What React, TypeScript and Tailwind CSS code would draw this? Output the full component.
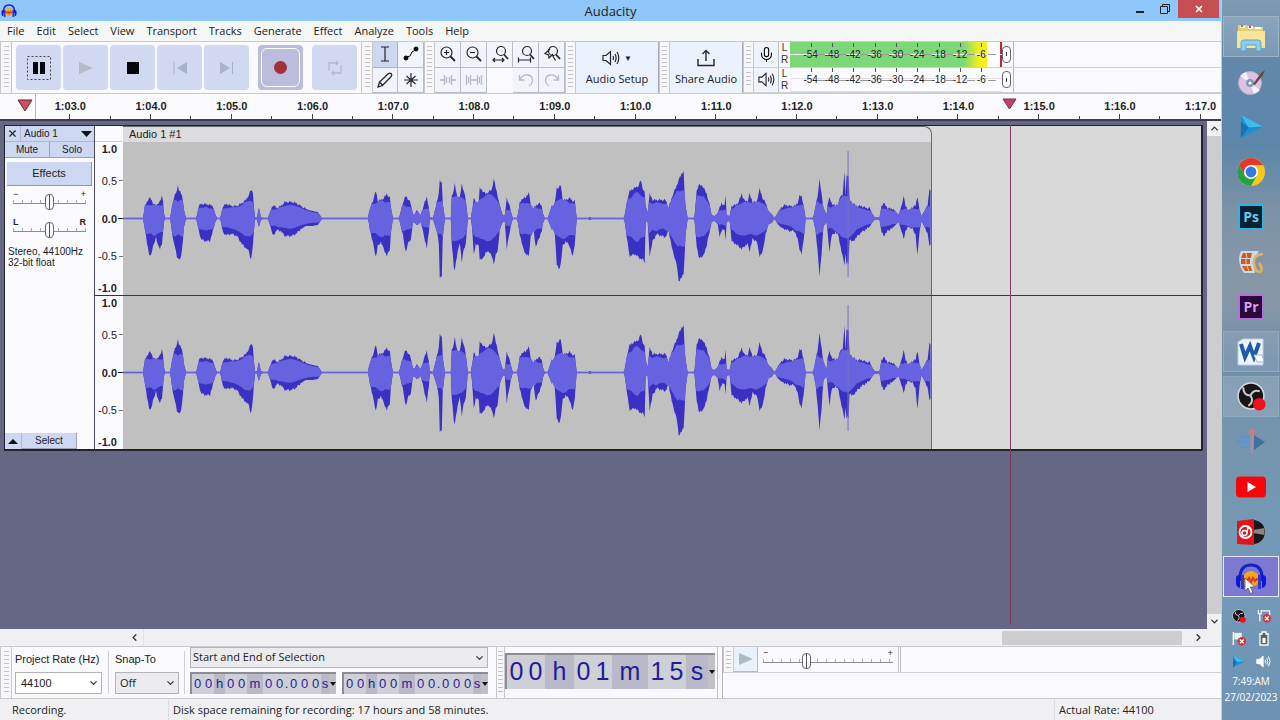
import type { ReactNode } from "react";
import clsx from "clsx";
import { ChevronDown, ChevronLeft, ChevronRight, ChevronUp, Mic, X } from "lucide-react";

const MENUS = ["File", "Edit", "Select", "View", "Transport", "Tracks", "Generate", "Effect", "Analyze", "Tools", "Help"];
const SECONDS = [3, 4, 5, 6, 7, 8, 9, 10, 11, 12, 13, 14, 15, 16, 17];
const DECIBELS = [-54, -48, -42, -36, -30, -24, -18, -12, -6];
const CLIP_START = 123;
const CLIP_WIDTH = 808;

// [x, height above the zero line, depth below it]
const ENVELOPE: number[][] = [
    [123, 0, 0], [143, 0, 0], [145, 12, 10], [147, 16, 24], [149, 20, 35], [151, 19, 36], [153, 15, 28], [156, 12, 18], [158, 15, 27], [160, 16, 29], [162, 22, 25], [163, 18, 15], [164, 5, 3], [165, 0, 0],
    [170, 0, 0], [171, 5, 5], [173, 17, 21], [175, 23, 27], [177, 27, 38], [178, 34, 40], [179, 27, 40], [181, 25, 38], [183, 18, 22], [184, 8, 8], [186, 0, 0],
    [196, 0, 0], [197, 3, 3], [199, 12, 12], [201, 14, 20], [205, 14, 22], [210, 13, 22], [213, 12, 12], [215, 5, 4], [217, 0, 0],
    [220, 0, 0], [221, 3, 3], [223, 12, 14], [227, 14, 16], [232, 12, 15], [237, 12, 17], [242, 15, 25], [246, 18, 29], [249, 23, 32], [251, 28, 41], [253, 26, 27], [254, 11, 12], [255, 1, 1],
    [257, 1, 1], [259, 10, 8], [261, 1, 1], [263, 0, 0],
    [268, 0, 0], [269, 3, 3], [271, 8, 9], [273, 13, 17], [277, 10, 11], [281, 12, 12], [285, 16, 17], [291, 16, 17], [296, 15, 15], [301, 12, 10], [306, 9, 7], [313, 7, 7], [318, 6, 6], [320, 3, 3], [322, 0, 0],
    [368, 0, 0], [369, 5, 4], [371, 12, 15], [374, 20, 28], [376, 27, 38], [378, 17, 27], [381, 18, 23], [384, 20, 30], [387, 24, 37], [390, 20, 30], [391, 12, 15], [393, 0, 0],
    [399, 0, 0], [400, 3, 3], [403, 15, 16], [406, 22, 33], [409, 18, 22], [411, 14, 21], [413, 4, 4], [415, 4, 4], [417, 8, 6], [419, 5, 5], [421, 3, 3], [423, 10, 12], [427, 21, 29], [429, 11, 14], [430, 1, 1],
    [433, 0, 0], [434, 3, 3], [437, 16, 12], [439, 25, 25], [440, 37, 58], [442, 35, 57], [443, 15, 19], [445, 0, 0],
    [451, 0, 0], [452, 22, 25], [454, 28, 48], [455, 34, 50], [457, 23, 38], [460, 20, 23], [462, 34, 43], [464, 27, 30], [466, 18, 25], [468, 0, 0],
    [471, 0, 0], [472, 6, 6], [474, 20, 35], [476, 15, 25], [479, 17, 27], [480, 30, 40], [483, 27, 40], [486, 24, 33], [490, 27, 33], [492, 28, 37], [494, 39, 45], [496, 30, 35], [498, 22, 32], [500, 12, 10], [503, 3, 3], [505, 3, 3], [507, 20, 30], [509, 15, 18], [511, 7, 7], [513, 0, 0],
    [517, 0, 0], [518, 3, 3], [520, 15, 15], [523, 20, 28], [526, 20, 35], [529, 26, 37], [531, 13, 17], [534, 10, 12], [536, 12, 28], [539, 15, 20], [542, 12, 12], [543, 5, 5], [545, 0, 0],
    [548, 0, 0], [549, 3, 3], [552, 12, 10], [555, 14, 13], [557, 30, 45], [559, 30, 50], [561, 33, 45], [563, 18, 27], [566, 18, 22], [570, 20, 27], [573, 17, 38], [575, 17, 25], [577, 0, 0],
    [589, 0, 0], [590, 1, 1], [592, 0, 0],
    [624, 0, 0], [625, 3, 3], [628, 20, 25], [630, 27, 37], [635, 30, 35], [639, 32, 38], [641, 38, 40], [643, 30, 40], [645, 25, 43], [646, 12, 3], [648, 5, 3], [650, 24, 37], [653, 18, 22], [657, 18, 15], [662, 18, 17], [666, 18, 18], [669, 10, 12], [673, 23, 32], [677, 32, 45], [679, 38, 62], [682, 44, 58], [684, 47, 55], [685, 22, 35], [686, 12, 15], [688, 0, 0],
    [694, 0, 0], [695, 3, 3], [697, 27, 27], [699, 33, 38], [703, 32, 38], [707, 24, 27], [710, 13, 12], [712, 3, 3], [715, 2, 2], [718, 5, 5], [720, 10, 17], [722, 15, 12], [725, 12, 10], [726, 23, 22], [727, 3, 3], [730, 2, 2],
    [732, 12, 22], [736, 13, 25], [739, 16, 27], [742, 24, 30], [745, 17, 27], [748, 17, 25], [750, 24, 32], [753, 16, 20], [757, 16, 22], [760, 29, 37], [763, 20, 33], [766, 15, 15], [769, 7, 5], [772, 4, 4], [775, 0, 0],
    [778, 5, 5], [781, 10, 8], [785, 13, 10], [790, 12, 12], [795, 12, 12], [798, 15, 20], [800, 22, 30], [802, 22, 35], [804, 13, 22], [806, 0, 0],
    [813, 0, 0], [814, 2, 2], [816, 12, 12], [818, 22, 32], [820, 38, 56], [822, 24, 35], [824, 10, 7], [827, 3, 3], [828, 15, 15], [830, 20, 32], [832, 15, 17], [836, 12, 13], [839, 15, 17], [841, 22, 28], [843, 23, 37], [845, 45, 45], [846, 22, 35], [847, 42, 45], [848, 43, 44], [849, 42, 45], [850, 18, 20], [853, 15, 23], [857, 12, 18], [862, 12, 13], [867, 10, 10], [870, 10, 8], [873, 4, 3], [875, 1, 1],
    [880, 1, 1], [882, 12, 13], [884, 15, 17], [888, 10, 12], [894, 9, 8], [899, 3, 3], [902, 12, 12], [904, 22, 20], [906, 12, 12], [909, 8, 8], [913, 11, 10], [916, 12, 15], [918, 22, 37], [920, 8, 12], [922, 2, 2], [925, 7, 8], [928, 13, 15], [930, 28, 26], [931, 28, 26],
];

function sample(side: number) {
    const out: number[] = [];
    let k = 0;
    for (let i = 0; i <= CLIP_WIDTH; i++) {
        const x = CLIP_START + i;
        while (k < ENVELOPE.length - 2 && ENVELOPE[k + 1][0] < x) k++;
        const [a, b] = [ENVELOPE[k], ENVELOPE[k + 1]];
        const t = (x - a[0]) / (b[0] - a[0]);
        const v = a[side] + (b[side] - a[side]) * t;
        out.push(v > 9 ? v + ((i * 7) % 5) * 0.6 - 1.2 : v);
    }
    return out;
}

function soften(values: number[], ratio: number) {
    return values.map((v, i) => {
        const near = values.slice(Math.max(0, i - 7), i + 8).filter((n) => n > 2);
        const mean = near.reduce((sum, n) => sum + n, 0) / Math.max(near.length, 1);
        return Math.min(v, mean * ratio);
    });
}

function outline(up: number[], down: number[]) {
    const top = up.map((v, i) => `${i},${(76 - v - 0.4).toFixed(1)}`);
    const bottom = down.map((v, i) => `${i},${(76 + v + 0.4).toFixed(1)}`).reverse();
    return `M${top.join("L")}L${bottom.join("L")}Z`;
}

const UP = sample(1);
const DOWN = sample(2);
const PEAK_PATH = outline(UP, DOWN);
const RMS_PATH = outline(soften(UP, 0.84), soften(DOWN, 0.6));

function Waveform() {
    return (
        <svg viewBox="0 0 808 152" preserveAspectRatio="none" className="block h-full w-full">
            <path d="M0 76H808" stroke="#3a30b4" strokeWidth="1.4" />
            <path d={PEAK_PATH} fill="#3a30c4" />
            <path d={RMS_PATH} fill="#6763e0" />
            <path d="M725.5 9V134" stroke="#7771bd" strokeWidth="1" />
        </svg>
    );
}

function Grip({ className }: { className?: string }) {
    return (
        <div className={clsx("flex shrink-0 items-center justify-center self-stretch border-x border-[#c8c8cc] bg-[#f7f7f9] py-1", className)}>
            <div className="h-full w-[5px] bg-[repeating-linear-gradient(to_bottom,#c4c4c8_0_1px,transparent_1px_4px)]" />
        </div>
    );
}

function BigButton({ label, children, className }: { label: string; children: ReactNode; className?: string }) {
    return (
        <button aria-label={label} className={clsx("flex size-[45px] items-center justify-center rounded-sm", className ?? "bg-[#d0d9f1]")}>
            {children}
        </button>
    );
}

function SmallButton({ label, children, active }: { label: string; children: ReactNode; active?: boolean }) {
    return (
        <button aria-label={label} className={clsx("flex items-center justify-center border-r border-b", active ? "border-[#a9b0c8] bg-[#cdd7f1]" : "border-[#b9bcc8] bg-[#f1f4fc]")}>
            {children}
        </button>
    );
}

function Glass({ children }: { children?: ReactNode }) {
    return (
        <svg width="18" height="18" viewBox="0 0 18 18" fill="none" stroke="#25252d" strokeWidth="1.2">
            {children}
        </svg>
    );
}

function Lens() {
    return (
        <>
            <circle cx="7.500" cy="7.500" r="5.500" />
            <path d="M11.500 11.500L16 16" strokeWidth="1.800" />
        </>
    );
}

function SmallLens() {
    return (
        <>
            <circle cx="10" cy="6" r="4.500" />
            <path d="M13 9.500L17 14" strokeWidth="1.800" />
        </>
    );
}

function Speaker({ size = 18, stroke = "#25252d", fill = "none" }: { size?: number; stroke?: string; fill?: string }) {
    return (
        <svg width={size} height={size} viewBox="0 0 18 18" fill="none" stroke={stroke} strokeWidth="1.2">
            <path d="M1 6.5H4L8.5 2.5V15.5L4 11.5H1Z" fill={fill} />
            <path d="M11 7Q12 9 11 11M13 5Q15.2 9 13 13M15 3Q18.6 9 15 15" />
        </svg>
    );
}

function TransportBar() {
    return (
        <div className="flex items-center">
            <Grip className="w-3" />
            <div className="flex gap-[2px] pl-1">
                <BigButton label="Pause">
                    <svg width="24" height="24" viewBox="0 0 24 24">
                        <rect x="0.5" y="0.5" width="23" height="23" fill="none" stroke="#444" strokeDasharray="2 2" />
                        <path d="M6 6H11V18H6ZM13 6H18V18H13Z" fill="#05050c" />
                    </svg>
                </BigButton>
                <BigButton label="Play">
                    <svg width="16" height="14" viewBox="0 0 16 14"><path d="M1 1L15 7L1 13Z" fill="#b1bbcc" /></svg>
                </BigButton>
                <BigButton label="Stop">
                    <svg width="12" height="12" viewBox="0 0 12 12"><path d="M0 0H12V12H0Z" fill="#05050c" /></svg>
                </BigButton>
                <BigButton label="Skip to start">
                    <svg width="16" height="14" viewBox="0 0 16 14"><path d="M15 1L5 7L15 13Z" fill="#a9b3c6" /><path d="M2 1V13" stroke="#a9b3c6" /></svg>
                </BigButton>
                <BigButton label="Skip to end">
                    <svg width="16" height="14" viewBox="0 0 16 14"><path d="M1 1L11 7L1 13Z" fill="#a9b3c6" /><path d="M13.500 1V13" stroke="#a9b3c6" /></svg>
                </BigButton>
            </div>
            <div className="flex gap-[9px] pr-1 pl-[9px]">
                <BigButton label="Record" className="bg-[#bcbcdc]">
                    <span className="flex size-[39px] items-center justify-center rounded-md border border-white">
                        <span className="size-[13px] rounded-full bg-[#a5303a]" />
                    </span>
                </BigButton>
                <BigButton label="Loop">
                    <svg width="16" height="16" viewBox="0 0 16 16" fill="none" stroke="#b0bacb" strokeWidth="1.3">
                        <path d="M2 11V3H11M9 1L11 3L9 5M14 5V13H5M7 11L5 13L7 15" />
                    </svg>
                </BigButton>
            </div>
        </div>
    );
}

function EditBars() {
    return (
        <>
            <Grip className="w-3" />
            <div className="grid grid-cols-[25px_26px] grid-rows-2">
                <SmallButton label="Selection tool" active>
                    <svg width="14" height="18" viewBox="0 0 14 18" fill="none" stroke="#25252d" strokeWidth="1.2"><path d="M3 2H11M7 2V16M3 16H11" /></svg>
                </SmallButton>
                <SmallButton label="Envelope tool">
                    <svg width="18" height="18" viewBox="0 0 18 18" fill="#05050c" stroke="#05050c"><path d="M3 13L8 11L10 7L15 4" fill="none" /><circle cx="4" cy="13" r="2" /><circle cx="14" cy="4" r="2" /></svg>
                </SmallButton>
                <SmallButton label="Draw tool">
                    <svg width="18" height="18" viewBox="0 0 18 18" fill="none" stroke="#25252d" strokeWidth="1.3"><path d="M2 16L3.500 11L12.500 2.500Q14 1.500 15.200 2.800T15.200 5.500L6.500 14.500Z M4 11.500L6.500 14" /></svg>
                </SmallButton>
                <SmallButton label="Multi tool">
                    <svg width="16" height="16" viewBox="0 0 16 16" stroke="#25252d" strokeWidth="1.200"><path d="M8 1V15M1 8H15M3.500 4L12.500 12M12.500 4L3.500 12" /></svg>
                </SmallButton>
            </div>
            <Grip className="w-[11px]" />
            <div className="grid grid-cols-5 grid-rows-2">
                <SmallButton label="Zoom in"><Glass><Lens /><path d="M5 7.500H10M7.500 5V10" /></Glass></SmallButton>
                <SmallButton label="Zoom out"><Glass><Lens /><path d="M5 7.500H10" /></Glass></SmallButton>
                <SmallButton label="Fit selection to width"><Glass><SmallLens /><path d="M2 15H13M4 13L2 15L4 17M11 13L13 15L11 17" /></Glass></SmallButton>
                <SmallButton label="Fit project to width"><Glass><SmallLens /><path d="M1.500 15H13.500M1.500 12.500V17.500M13.500 12.500V17.500" /></Glass></SmallButton>
                <SmallButton label="Zoom toggle"><Glass><SmallLens /><path d="M7 4L2 8.500L5.500 10L6 13L10 9M9.500 10.500L12.500 15.500" /></Glass></SmallButton>
                <SmallButton label="Trim audio">
                    <svg width="16" height="14" viewBox="0 0 16 14" stroke="#b7bac6" fill="none"><path d="M0 7H4M12 7H16M4.500 2V12M6.500 4V10M9.500 4V10M11.500 2V12" strokeWidth="1.300" /></svg>
                </SmallButton>
                <SmallButton label="Silence audio">
                    <svg width="18" height="14" viewBox="0 0 18 14" stroke="#b7bac6" fill="none"><path d="M1.500 2V12M3.500 4V10M5.500 2V12M6 7H12M12.500 2V12M14.500 4V10M16.500 2V12" strokeWidth="1.300" /></svg>
                </SmallButton>
                <div className="w-[26px]" />
                <SmallButton label="Undo">
                    <svg width="18" height="16" viewBox="0 0 18 16" stroke="#b7bac6" strokeWidth="1.300" fill="none"><path d="M2.500 3V8H7.500M3 7.500Q6 2 11 3T15.500 9Q15 12 12 14" /></svg>
                </SmallButton>
                <SmallButton label="Redo">
                    <svg width="18" height="16" viewBox="0 0 18 16" stroke="#b7bac6" strokeWidth="1.300" fill="none"><path d="M15.500 3V8H10.500M15 7.500Q12 2 7 3T2.500 9Q3 12 6 14" /></svg>
                </SmallButton>
            </div>
        </>
    );
}

function MeterRow({ label, icon, live }: { label: string; icon: ReactNode; live?: boolean }) {
    return (
        <div className="flex h-[26px] border-b border-[#cfcfd6]">
            <Grip className="w-[11px]" />
            <button aria-label={label} className="flex w-[25px] items-center justify-center border-r border-[#b9bcc8] bg-[#eef3fc]">{icon}</button>
            <div className="flex w-[11px] flex-col items-center justify-around font-[Liberation_Sans,sans-serif] text-[10px] leading-3 text-[#333]">
                <span>L</span>
                <span>R</span>
            </div>
            <div className="relative flex w-[212px] flex-col gap-[1px]">
                {[0, 1].map((n) => (
                    <div key={n} className={clsx("flex flex-1 border-[#e0e0e6]", live ? "bg-[#fdfdfd]" : "border-b bg-[#fbfbfe]")}>
                        {live && <div className="w-[93%] bg-[linear-gradient(to_right,#7cd877_88%,#f3f01c_96%)]" />}
                        {live && <div className="ml-auto w-[2px] bg-[#c22531]" />}
                    </div>
                ))}
                <div className="absolute inset-0 flex items-center px-[10px] font-[Liberation_Sans,sans-serif] text-[10px] text-[#222]">
                    {DECIBELS.map((db) => (
                        <span key={db} className="relative flex-1 text-center">
                            <span className="absolute -top-[4px] left-1/2 h-[4px] w-px bg-[#555]" />
                            <span className="absolute top-1/2 -right-1 h-px w-2 bg-[#999]" />
                            {db}
                        </span>
                    ))}
                </div>
            </div>
            <div className="flex w-[11px] items-center">
                <span className="flex h-[17px] w-[9px] items-center justify-center rounded-sm border border-[#666] bg-white">
                    <span className="h-1 w-px bg-[#333]" />
                </span>
            </div>
            <div className="w-px bg-[#b5b5ba]" />
        </div>
    );
}

function TopToolbars() {
    return (
        <div className="flex h-[53px] border-y border-[#c9c9ce] bg-[#f9f9fe]">
            <TransportBar />
            <EditBars />
            <Grip className="w-[11px]" />
            <button className="flex w-[83px] flex-col items-center justify-center gap-1 border-r border-[#a9acb8] bg-[#ebf2fd] text-[11px] leading-4 text-[#222]">
                <span className="flex items-center gap-1"><Speaker /><span className="text-[8px]">▼</span></span>
                Audio Setup
            </button>
            <Grip className="w-[11px]" />
            <button className="flex w-[73px] flex-col items-center justify-center gap-1 border-r border-[#a9acb8] bg-[#ebf2fd] text-[11px] leading-4 whitespace-nowrap text-[#222]">
                <svg width="18" height="18" viewBox="0 0 18 18" fill="none" stroke="#25252d" strokeWidth="1.4"><path d="M1 10V16.500H17V10M9 12V1.500M5.500 5L9 1.500L12.500 5" /></svg>
                Share Audio
            </button>
            <div className="flex flex-1 flex-col">
                <MeterRow label="Record meter" icon={<Mic size={17} strokeWidth={1.5} />} live />
                <MeterRow label="Playback meter" icon={<Speaker size={17} />} />
            </div>
        </div>
    );
}

function Timeline() {
    return (
        <div className="relative flex h-[27px] overflow-hidden border-b-2 border-[#3c3b52] bg-[#fafaff] font-[Liberation_Sans,sans-serif]">
            <div className="-mr-[6px] flex w-9 shrink-0 justify-center border-r border-[#b5b5ba] pt-[5px] pl-[14px]">
                <svg width="16" height="13" viewBox="0 0 16 13"><path d="M1 1H15L8 12Z" fill="#d0505c" stroke="#5c2a33" /></svg>
            </div>
            <div className="-mr-5 flex flex-1">
                {SECONDS.map((s) => (
                    <div key={s} className="flex flex-1 flex-col justify-between">
                        <span className="pt-1 text-center text-[11px] leading-4 font-bold text-[#222]">1:{String(s).padStart(2, "0")}.0</span>
                        <div className="flex items-end">
                            <span className="h-[5px] flex-1 border-r border-[#444]" />
                            <span className="h-[3px] flex-1 border-r border-[#444]" />
                        </div>
                    </div>
                ))}
            </div>
            <svg width="15" height="12" viewBox="0 0 15 12" className="absolute top-1 left-[82.1%]"><path d="M1 1H14L7.500 11Z" fill="#c04468" stroke="#7a3048" /></svg>
        </div>
    );
}

function RangeRow({ label, left, right, className, value = 50 }: { label: string; left: string; right: string; className?: string; value?: number }) {
    return (
        <label className={clsx("flex flex-col", className)}>
            <span className="-mb-1 flex justify-between text-[9px] leading-2 text-[#222]">
                <span>{left}</span>
                <span>{right}</span>
            </span>
            <input
                type="range"
                aria-label={label}
                defaultValue={value}
                className="h-4 w-full appearance-none bg-[linear-gradient(#8b8b90,#8b8b90),repeating-linear-gradient(to_right,#aaa_0_1px,transparent_1px_9px)] bg-[length:100%_1px,100%_3px] bg-[position:0_9px,0_6px] bg-no-repeat [&::-webkit-slider-thumb]:h-4 [&::-webkit-slider-thumb]:w-[9px] [&::-webkit-slider-thumb]:appearance-none [&::-webkit-slider-thumb]:rounded-sm [&::-webkit-slider-thumb]:border [&::-webkit-slider-thumb]:border-[#666] [&::-webkit-slider-thumb]:bg-[linear-gradient(to_right,#fff_3px,#555_3px_4px,#fff_4px)]"
            />
        </label>
    );
}

function TrackPanel() {
    return (
        <div className="flex w-[90px] shrink-0 flex-col border-r border-[#4a4a5c] bg-[#fafaff] text-[10px] text-[#222]">
            <div className="flex h-4 border-b border-[#b0b8d0] bg-[#ccd7f2]">
                <button aria-label="Close track" className="flex w-4 items-center justify-center border-r border-[#b0b8d0]"><X size={11} strokeWidth={2.5} /></button>
                <button className="flex flex-1 items-center justify-between pr-[2px] pl-[3px]">
                    Audio 1
                    <svg width="11" height="6" viewBox="0 0 11 6"><path d="M0 0H11L5.500 6Z" fill="#111" /></svg>
                </button>
            </div>
            <div className="flex h-4 border-b border-[#9aa2bc] bg-[#ccd7f2]">
                <button className="flex-1 border-r border-[#9aa2bc]">Mute</button>
                <button className="flex-1">Solo</button>
            </div>
            <button className="mx-[2px] mt-1 h-6 border-r border-b border-[#8f97b0] bg-[#ccd7f2] text-[11px]">Effects</button>
            <RangeRow label="Gain" left="−" right="+" className="mx-2 mt-1" />
            <RangeRow label="Pan" left="L" right="R" className="mx-2 mt-2 font-bold" />
            <p className="mt-2 pl-[3px] leading-[11px] whitespace-nowrap">Stereo, 44100Hz<br />32-bit float</p>
            <div className="mt-auto mr-[17px] flex h-4 bg-[#ccd7f2]">
                <button aria-label="Collapse track" className="flex w-[17px] items-center justify-center border-r border-[#b0b8d0]">
                    <svg width="10" height="5" viewBox="0 0 10 5"><path d="M0 5H10L5 0Z" fill="#111" /></svg>
                </button>
                <button className="flex-1 border-r border-b border-[#9aa2bc]">Select</button>
            </div>
        </div>
    );
}

function VerticalScale() {
    return (
        <div className="grid flex-1 grid-rows-[14px_1fr_26px_1fr_14px] items-center text-right text-[11px] leading-3 text-[#222]">
            <span className="pr-[6px] font-bold">1.0</span>
            <span className="flex items-center justify-end gap-[2px]">0.5<i className="h-px w-1 bg-[#777]" /></span>
            <span className="flex items-center justify-end gap-[1px] font-bold">0.0<i className="h-px w-[5px] bg-[#222]" /></span>
            <span className="flex items-center justify-end gap-[2px]">-0.5<i className="h-px w-1 bg-[#777]" /></span>
            <span className="pr-[6px] font-bold">-1.0</span>
        </div>
    );
}

function Workspace() {
    return (
        <div className="relative flex min-h-0 flex-1 bg-[#666685]">
            <div className="min-w-0 flex-1 px-1 pt-1">
                <div className="flex h-[326px] border border-r-2 border-b-2 border-[#22222e] bg-[#d9d9d9] font-[Liberation_Sans,sans-serif]">
                    <TrackPanel />
                    <div className="flex w-7 shrink-0 flex-col bg-[#fbfbff]">
                        <div className="h-4 border-b border-[#ccc]" />
                        <VerticalScale />
                        <div className="h-px bg-[#333]" />
                        <VerticalScale />
                    </div>
                    <div className="relative min-w-0 flex-1">
                        <div className="flex h-full w-3/4 flex-col rounded-tr-lg border-t border-r border-[#6a6a6e] bg-[#c0c0c0]">
                            <div className="h-[15px] rounded-tr-lg bg-[#dcdcde] pl-[6px] text-[11px] leading-[15px] text-[#222]">Audio 1 #1</div>
                            <div className="min-h-0 flex-1"><Waveform /></div>
                            <div className="h-px" />
                            <div className="min-h-0 flex-1"><Waveform /></div>
                        </div>
                        <div className="absolute inset-x-0 top-[169px] h-px bg-[#3a3a3e]" />
                    </div>
                </div>
            </div>
            <div className="absolute top-1 bottom-1 left-[82.7%] w-px bg-[#7a3c62]" />
            <div className="flex w-[14px] flex-col items-center bg-[#cdcdcf] text-[#333]">
                <button aria-label="Scroll up" className="flex h-[15px] w-full items-center justify-center bg-[#f1f1f3]"><ChevronUp size={11} strokeWidth={3} /></button>
                <button aria-label="Scroll down" className="mt-auto flex h-[15px] w-full items-center justify-center bg-[#f1f1f3]"><ChevronDown size={11} strokeWidth={3} /></button>
            </div>
        </div>
    );
}

function Digits({ text, large }: { text: string; large?: boolean }) {
    return (
        <div className={clsx("flex border-t-2 border-l-2 border-[#8c8c92] bg-[#cfcfd8] font-[Liberation_Sans,sans-serif] text-[#221c98]", large ? "h-9 text-[25px]" : "h-[22px] text-[13px]")}>
            {text.split("").map((c, i) => (
                <span
                    key={i}
                    className={clsx(
                        "flex items-center justify-center",
                        /\d/.test(c) && (large ? "w-[19px]" : "w-[11px]"),
                        c === "h" && (large ? "w-[29px] bg-[#b9b9ca]" : "w-[11px] bg-[#b9b9ca]"),
                        c === "m" && (large ? "w-9 bg-[#b9b9ca]" : "w-4 bg-[#b9b9ca]"),
                        c === "s" && (large ? "w-[22px] bg-[#b9b9ca]" : "w-2 bg-[#b9b9ca]"),
                        c === "." && "w-[3px]",
                    )}
                >
                    {c}
                </span>
            ))}
            <button aria-label="Time format" className="flex w-[7px] items-center justify-center bg-[#c0c0c6]">
                <svg width="6" height="4" viewBox="0 0 6 4"><path d="M0 0H6L3 4Z" fill="#111" /></svg>
            </button>
        </div>
    );
}

function Select({ id, label, value, className }: { id: string; label?: string; value: string; className: string }) {
    return (
        <span className="relative flex">
            <select id={id} aria-label={label} className={clsx("w-full appearance-none border border-[#b4b4b8] text-[11px] text-[#222]", className)}>
                <option>{value}</option>
            </select>
            <ChevronDown size={11} strokeWidth={2.5} className="pointer-events-none absolute top-1/2 right-[3px] -translate-y-1/2 text-[#333]" />
        </span>
    );
}

function BottomToolbars() {
    return (
        <div className="flex h-[53px] border-y border-[#c9c9ce] bg-[#f9f9fe] text-[11px] text-[#222]">
            <Grip className="w-3" />
            <div className="flex w-[90px] flex-col justify-between py-1 pl-[3px]">
                <label htmlFor="rate" className="font-[Liberation_Sans,sans-serif] leading-4 whitespace-nowrap">Project Rate (Hz)</label>
                <Select id="rate" value="44100" className="h-[22px] bg-white pl-[5px] font-[Liberation_Sans,sans-serif]" />
            </div>
            <div className="mx-[6px] my-1 w-px bg-[#d0d0d4]" />
            <div className="flex w-[64px] flex-col justify-between py-1">
                <label htmlFor="snap" className="font-[Liberation_Sans,sans-serif] leading-4">Snap-To</label>
                <Select id="snap" value="Off" className="h-[22px] bg-[#ebebed] pl-1" />
            </div>
            <div className="mx-[5px] my-1 w-px bg-[#d0d0d4]" />
            <div className="flex flex-col justify-between pb-1">
                <Select id="range" label="Selection range" value="Start and End of Selection" className="h-[21px] bg-[#ebebed] pl-[2px]" />
                <div className="flex gap-[6px]">
                    <Digits text="00h00m00.000s" />
                    <Digits text="00h00m00.000s" />
                </div>
            </div>
            <Grip className="ml-2 w-[9px]" />
            <div className="mr-1 flex items-start border-r border-[#c0c0c5] pt-[6px] pr-[2px]"><Digits text="00h01m15s" large /></div>
            <div className="flex flex-1 flex-col border-l border-[#b5b5ba]">
                <div className="flex h-[26px] border-b border-[#cfcfd6]">
                    <Grip className="w-[11px]" />
                    <button aria-label="Play at speed" className="flex w-6 items-center justify-center border-r border-b border-[#b9bcc8] bg-[#e9f1fc]">
                        <svg width="14" height="12" viewBox="0 0 14 12"><path d="M0 0L14 6L0 12Z" fill="#a9bbc6" /></svg>
                    </button>
                    <RangeRow label="Playback speed" left="−" right="+" value={32} className="mx-[5px] w-[130px] pt-[2px]" />
                    <div className="w-[3px] border-x border-[#c0c0c5]" />
                </div>
            </div>
        </div>
    );
}

function Obs({ size }: { size: number }) {
    return (
        <svg width={size} height={size} viewBox="0 0 28 28">
            <circle cx="13.500" cy="13.500" r="12.500" fill="#171719" stroke="#d8d8da" strokeWidth="1.5" />
            <g fill="none" stroke="#c9c9cc" strokeWidth="2">
                <path d="M13 13Q6 13 6 5" />
                <path d="M13 13Q16 7 22 9" />
                <path d="M13 13Q17 19 11 23" />
            </g>
            <circle cx="21.500" cy="21.500" r="6" fill="#f4101a" />
        </svg>
    );
}

function BlueArrow({ size }: { size: number }) {
    return (
        <svg width={size} height={size} viewBox="0 0 26 26">
            <path d="M2 1L25 13L2 25Z" fill="#1c8fd0" />
            <path d="M2 1L25 13L10 14Z" fill="#45b8ee" />
            <path d="M2 25L10 14L2 8Z" fill="#1673b2" />
        </svg>
    );
}

function AudacityLogo({ size }: { size: number }) {
    return (
        <svg width={size} height={size} viewBox="0 0 32 32">
            <circle cx="16" cy="18" r="8" fill="#f6a61e" />
            <path d="M7 19L10 18L12 20L14 17L16 21L18 17L20 20L22 18L25 19" stroke="#e23b18" strokeWidth="2.200" fill="none" />
            <path d="M5 20V15Q6 4 16 4T27 15V20" fill="none" stroke="#1522c8" strokeWidth="3" />
            <path d="M1 17Q1 14 5 14V27Q1 26 1 22ZM31 17Q31 14 27 14V27Q31 26 31 22Z" fill="#0d16d8" />
            <path d="M6 14H9V28H6ZM23 14H26V28H23Z" fill="#2a38d0" />
        </svg>
    );
}

function AdobeTile({ text, className }: { text: string; className: string }) {
    return <span className={clsx("flex size-[26px] items-center justify-center border-2 text-[14px] leading-none font-bold", className)}>{text}</span>;
}

const APPS: { name: string; frame?: string; icon: ReactNode }[] = [
    {
        name: "File Explorer",
        frame: "border-[#9db2c5] bg-white/15",
        icon: (
            <svg width="32" height="32" viewBox="0 0 32 32">
                <path d="M3 4H12L14 6H28V26H3Z" fill="#e9cf72" />
                <path d="M5 5H10V7H5ZM13 5H18V8H13ZM20 6H26V8H20Z" fill="#fff" />
                <path d="M6 4H8V6H6Z" fill="#4a9a44" />
                <path d="M14 5H16V7H14Z" fill="#c8483a" />
                <path d="M2 10H30V27H2Z" fill="#f8e59a" />
                <path d="M6 30V22Q6 19 9 19H23Q26 19 26 22V30H21V24H11V30Z" fill="#8fcdec" stroke="#5aa6d0" />
            </svg>
        ),
    },
    {
        name: "Disc Burner",
        icon: (
            <svg width="30" height="30" viewBox="0 0 30 30">
                <circle cx="14" cy="16" r="11.500" fill="#dcc3e4" stroke="#b9a6cc" />
                <path d="M14 16L4 9A12 12 0 0 1 10 5ZM14 16L24 23A12 12 0 0 1 18 27Z" fill="#f5f0fa" />
                <circle cx="14" cy="16" r="4" fill="#7c98c0" />
                <circle cx="14" cy="16" r="1.500" fill="#fff" />
                <path d="M17 17L25 6L29 3L27 8L19 18Z" fill="#6c4a38" />
            </svg>
        ),
    },
    { name: "Media Player", icon: <BlueArrow size={25} /> },
    {
        name: "Chrome",
        icon: (
            <svg width="30" height="30" viewBox="0 0 30 30">
                <circle cx="15" cy="15" r="14" fill="#f8c91c" />
                <path d="M2.900 8A14 14 0 0 0 15 29L21 18.500L15 15L9 18.500Z" fill="#27a046" />
                <path d="M2.900 8A14 14 0 0 1 27.100 8H15L9 18.500Z" fill="#e0392d" />
                <circle cx="15" cy="15" r="7" fill="#fff" />
                <circle cx="15" cy="15" r="5.400" fill="#3577e4" />
            </svg>
        ),
    },
    { name: "Photoshop", icon: <AdobeTile text="Ps" className="border-[#2fb2dc] bg-[#0b1f33] text-[#5fcdf0]" /> },
    {
        name: "Video Editor",
        icon: (
            <svg width="28" height="26" viewBox="0 0 28 26">
                <path d="M4 2H22Q15 12 18 24H7Q-1 13 4 2Z" fill="#c9dbe8" />
                <path d="M6 4H15L14 9H4ZM4 10H13V15H4ZM5 17H14L15 22H8Z" fill="#d05a22" />
                <path d="M9 4L10 9M9 10V15M10 17L12 22" stroke="#f2c8a0" strokeWidth="1" />
                <path d="M26 5Q16 6 17 14Q18 23 23 23Q27 21 22 14" fill="none" stroke="#e0b457" strokeWidth="2.500" />
            </svg>
        ),
    },
    { name: "Premiere", icon: <AdobeTile text="Pr" className="border-[#b66fd6] bg-[#2a0a3a] text-[#dc9cf4]" /> },
    {
        name: "Word",
        frame: "border-[#90a8bd] bg-white/10",
        icon: (
            <svg width="28" height="28" viewBox="0 0 28 28">
                <path d="M1 4L6 1H26V27H1Z" fill="#eef4fb" stroke="#b9cfe6" />
                <path d="M4 6L8 19L13 8L17 19L22 5" fill="none" stroke="#2259ac" strokeWidth="4" />
                <path d="M17 17H25L27 24H20Z" fill="#fff" stroke="#9db8d8" />
            </svg>
        ),
    },
    { name: "OBS Studio", frame: "border-[#90a8bd] bg-white/15", icon: <Obs size={29} /> },
    {
        name: "Recorder",
        icon: (
            <svg width="30" height="26" viewBox="0 0 30 26">
                <path d="M4 8H14M1 13H14M5 18H14" stroke="#5d95d0" strokeWidth="3" />
                <path d="M18 6L29 13L18 21Z" fill="#41719e" />
                <path d="M16 2V24" stroke="#a98ba4" strokeWidth="3" />
                <circle cx="16" cy="3" r="3" fill="#d07b84" />
            </svg>
        ),
    },
    {
        name: "YouTube",
        icon: <svg width="30" height="22" viewBox="0 0 30 22"><rect width="30" height="21" y="0.500" rx="4" fill="#f5060b" /><path d="M11.500 6L20 11L11.500 16Z" fill="#fff" /></svg>,
    },
    {
        name: "Music",
        icon: (
            <svg width="30" height="28" viewBox="0 0 30 28">
                <circle cx="17" cy="14" r="12" fill="#1b1718" />
                <path d="M17 12L28.500 10V17L17 15Z" fill="#8c8480" />
                <path d="M1 3L18 1V27L1 26Z" fill="#e3131b" />
                <circle cx="9.500" cy="14" r="6" fill="none" stroke="#fff" strokeWidth="1.800" />
                <circle cx="8.500" cy="15" r="2.500" fill="none" stroke="#fff" strokeWidth="1.500" />
                <path d="M11 15L12 9L14 11" stroke="#fff" strokeWidth="1.500" fill="none" />
            </svg>
        ),
    },
    { name: "Audacity", frame: "border-[#e4e8fa] bg-[#7b7ad0]", icon: <AudacityLogo size={32} /> },
];

function RedCross() {
    return (
        <g>
            <circle cx="11" cy="11" r="4.500" fill="#d6303a" />
            <path d="M9 9L13 13M13 9L9 13" stroke="#fff" strokeWidth="1.400" />
        </g>
    );
}

function Taskbar() {
    return (
        <aside className="flex w-[58px] shrink-0 flex-col overflow-hidden bg-[linear-gradient(to_bottom,#7f9bb3,#6288aa_8%,#5b86aa_20%,#7f93a6_30%,#8797a7_42%,#6f8ea8_50%,#7695ae_62%,#7399b9_80%,#6f92b2)] pt-[14px]">
            {APPS.map((app) => (
                <div key={app.name} className="flex h-[45px] shrink-0 items-center px-px">
                    <button aria-label={app.name} className={clsx("relative flex h-[41px] w-full items-center justify-center border", app.frame ?? "border-transparent")}>
                        {app.icon}
                        {app.name === "Audacity" && (
                            <svg width="12" height="18" viewBox="0 0 12 18" className="absolute top-5 left-5"><path d="M1 1V14L4 11L6.500 16.500L9 15.500L6.500 10H11Z" fill="#fff" stroke="#555" strokeWidth="0.800" /></svg>
                        )}
                    </button>
                </div>
            ))}
            <div className="grid grid-cols-2 place-items-center gap-y-2 px-1 pt-[9px]">
                <Obs size={14} />
                <svg width="16" height="15" viewBox="0 0 16 16" fill="none"><path d="M5 3H14V11H6M2 2V6H5V2M3.500 6V14" stroke="#eef2f6" strokeWidth="1.400" /><RedCross /></svg>
                <svg width="16" height="15" viewBox="0 0 16 16"><path d="M2 1V15" stroke="#fff" strokeWidth="1.500" /><path d="M3 2H11V9H3Z" fill="#eef2f6" /><RedCross /></svg>
                <svg width="10" height="15" viewBox="0 0 10 15"><path d="M3 1H7V3H9V14H1V3H3Z" fill="#566" stroke="#fff" strokeWidth="1.300" /><path d="M3.500 7H6.500V12H3.500Z" fill="#fff" /></svg>
                <BlueArrow size={13} />
                <Speaker size={15} stroke="#fff" fill="#fff" />
            </div>
            <div className="pt-1 text-center text-[10px] leading-4 whitespace-nowrap text-white">
                <p>7:49:AM</p>
                <p>27/02/2023</p>
            </div>
        </aside>
    );
}

export default function App() {
    return (
        <div className="flex h-screen overflow-hidden font-[Open_Sans,sans-serif]">
            <main className="flex min-w-0 flex-1 flex-col border-r border-[#c5ccd4] bg-[#f0f0f2]">
                <header className="relative flex h-[21px] items-center justify-center bg-[#8fc7fb]">
                    <span className="absolute top-[3px] left-[1px]"><AudacityLogo size={16} /></span>
                    <h1 className="text-[13px] leading-5 text-[#222]">Audacity</h1>
                    <div className="absolute top-0 right-[2px] flex h-[18px] items-center">
                        <button aria-label="Minimize" className="flex w-6 justify-center pt-[5px]"><span className="h-[2px] w-2 bg-[#222]" /></button>
                        <button aria-label="Restore" className="flex w-[26px] justify-center">
                            <svg width="10" height="10" viewBox="0 0 10 10" fill="none" stroke="#222"><path d="M0.500 2.500H7.500V9.500H0.500ZM2.500 2V0.500H9.500V7.500H8" /></svg>
                        </button>
                        <button aria-label="Close" className="flex h-full w-[41px] items-center justify-center bg-[#c64f53] text-white"><X size={10} strokeWidth={4} /></button>
                    </div>
                </header>
                <nav className="flex h-5 items-center gap-3 bg-[#f5f6f6] pl-[7px] text-[11px] text-[#222]">
                    {MENUS.map((m) => <button key={m}>{m}</button>)}
                </nav>
                <TopToolbars />
                <Timeline />
                <Workspace />
                <div className="flex h-[17px] items-center bg-[#f0f0f3] text-[#333]">
                    <button aria-label="Scroll left" className="flex h-full w-[144px] items-center justify-end border-r border-[#e2e2e6] pr-[3px]"><ChevronLeft size={11} strokeWidth={3} /></button>
                    <div className="mr-[11px] ml-auto h-[14px] w-[180px] bg-[#cdcdcf]" />
                    <button aria-label="Scroll right" className="mr-[17px]"><ChevronRight size={11} strokeWidth={3} /></button>
                </div>
                <BottomToolbars />
                <footer className="flex h-[21px] items-center text-[11px] leading-5 text-[#222]">
                    <span className="w-[169px] border-r border-[#dcdce0] pl-3">Recording.</span>
                    <span className="flex-1 pl-1">Disk space remaining for recording: 17 hours and 58 minutes.</span>
                    <span className="w-[167px] border-l border-[#dcdce0] pl-1">Actual Rate: 44100</span>
                </footer>
            </main>
            <Taskbar />
        </div>
    );
}
